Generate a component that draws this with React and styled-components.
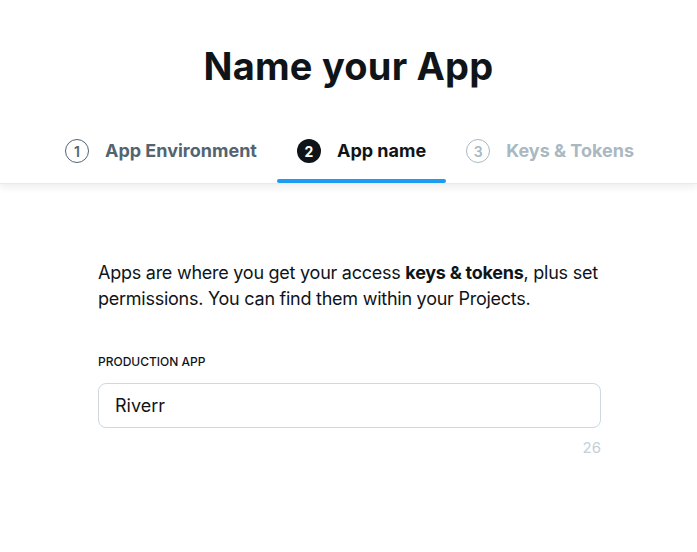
import React from "react";
import styled, { createGlobalStyle } from "styled-components";

const Global = createGlobalStyle`
  html, body { margin: 0; padding: 0; background: #fff; }
  body { font-family: Inter, "Noto Sans", sans-serif; color: #0f1419; }
`;

const Page = styled.div`
  width: 697px;
  min-height: 552px;
  overflow: hidden;
`;

const Header = styled.header`
  background: #fff;
  box-shadow: 0 3px 8px rgba(0, 0, 0, 0.08);
  border-bottom: 1px solid #e6eaec;
  display: flex;
  flex-direction: column;
  align-items: center;
`;

const Title = styled.h1`
  margin: 38px 0 0;
  font-size: 38px;
  line-height: 56px;
  font-weight: 700;
  letter-spacing: 0.2px;
  color: #0f1419;
`;

const Tabs = styled.nav`
  display: flex;
  margin-top: 25px;
  padding-left: 2px;
`;

const Tab = styled.div`
  display: flex;
  align-items: center;
  gap: 16px;
  padding: 0 20px;
  height: 64px;
  box-sizing: border-box;
  position: relative;
  color: ${(p) => (p.$state === "active" ? "#0f1419" : p.$state === "done" ? "#536471" : "#aab8c2")};
  &::after {
    content: "";
    display: ${(p) => (p.$state === "active" ? "block" : "none")};
    position: absolute;
    left: 0;
    right: 0;
    bottom: 0;
    height: 4px;
    border-radius: 2px;
    background: #1d9bf0;
  }
`;

const Circle = styled.span`
  width: 24px;
  height: 24px;
  border-radius: 50%;
  box-sizing: border-box;
  display: flex;
  align-items: center;
  justify-content: center;
  font-size: 14px;
  font-weight: 700;
  ${(p) =>
    p.$state === "active"
      ? "background: #0f1419; color: #fff;"
      : `border: 1px solid ${p.$state === "done" ? "#536471" : "#aab8c2"}; font-weight: 600;`}
`;

const TabLabel = styled.span`
  font-size: 18px;
  font-weight: 700;
  line-height: 24px;
`;

const Body = styled.main`
  padding: 76px 96px 0 98px;
`;

const Intro = styled.p`
  margin: 0;
  width: 506px;
  font-size: 18px;
  line-height: 26px;
  letter-spacing: -0.25px;
  color: #0f1419;
  b { font-weight: 700; }
`;

const Label = styled.label`
  display: block;
  margin-top: 42px;
  font-size: 12px;
  line-height: 16px;
  font-weight: 500;
  text-transform: uppercase;
  color: #0f1419;
`;

const Input = styled.input`
  display: block;
  box-sizing: border-box;
  width: 503px;
  height: 45px;
  margin-top: 13px;
  padding: 0 16px;
  border: 1px solid #cfd9de;
  border-radius: 8px;
  font-family: inherit;
  font-size: 18px;
  color: #0f1419;
  outline: none;
  background: #fff;
`;

const Counter = styled.div`
  width: 503px;
  margin-top: 10px;
  text-align: right;
  font-size: 15px;
  line-height: 20px;
  color: #c4d0d8;
`;

const steps = [
  { n: 1, label: "App Environment", state: "done" },
  { n: 2, label: "App name", state: "active" },
  { n: 3, label: "Keys & Tokens", state: "todo" },
];

export default function App() {
  return (
    <Page>
      <Global />
      <Header>
        <Title>Name your App</Title>
        <Tabs>
          {steps.map((s) => (
            <Tab key={s.n} $state={s.state}>
              <Circle $state={s.state}>{s.n}</Circle>
              <TabLabel>{s.label}</TabLabel>
            </Tab>
          ))}
        </Tabs>
      </Header>
      <Body>
        <Intro>
          Apps are where you get your access <b>keys &amp; tokens</b>, plus set
          permissions. You can find them within your Projects.
        </Intro>
        <Label htmlFor="appname">Production App</Label>
        <Input id="appname" defaultValue="Riverr" />
        <Counter>26</Counter>
      </Body>
    </Page>
  );
}
